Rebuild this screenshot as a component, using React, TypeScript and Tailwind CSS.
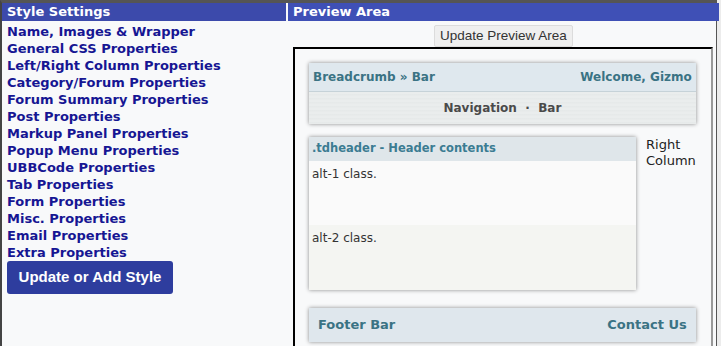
import React from "react";

const verdana = { fontFamily: '"DejaVu Sans", Verdana, sans-serif' };
const arial = { fontFamily: '"Liberation Sans", Arial, sans-serif' };

const links = [
  "Name, Images & Wrapper",
  "General CSS Properties",
  "Left/Right Column Properties",
  "Category/Forum Properties",
  "Forum Summary Properties",
  "Post Properties",
  "Markup Panel Properties",
  "Popup Menu Properties",
  "UBBCode Properties",
  "Tab Properties",
  "Form Properties",
  "Misc. Properties",
  "Email Properties",
  "Extra Properties",
];

function SettingsColumn() {
  return (
    <div className="flex flex-col">
      <div className="h-[18px] bg-[#3c4aab] pl-[5px] text-[13px] font-bold leading-[18px] text-white">
        Style Settings
      </div>
      <nav className="flex flex-col pt-[2px] pl-[5px]">
        {links.map((l) => (
          <a key={l} className="h-[17px] text-[13px] font-bold leading-[17px] text-[#161693]">
            {l}
          </a>
        ))}
      </nav>
      <div className="pl-[5px]">
        <button
          style={arial}
          className="h-[33px] w-[166px] rounded-[3px] bg-[#2e3d9e] text-[15px] font-bold text-white"
        >
          Update or Add Style
        </button>
      </div>
    </div>
  );
}

function Preview() {
  return (
    <div className="flex flex-col">
      <div className="h-[18px] bg-[#3f50b6] pl-[5px] text-[13px] font-bold leading-[18px] text-white">
        Preview Area
      </div>
      <div className="flex justify-center pt-[4px]">
        <button
          style={arial}
          className="h-[22px] rounded-[2px] border border-[#dcdcdc] bg-[#efefef] px-[5px] text-[13.5px] leading-[20px] text-[#333]"
        >
          Update Preview Area
        </button>
      </div>
      <div className="ml-[5px] mr-[6px] h-[320px] border-l-2 border-t-2 border-r-2 border-l-black border-t-black border-r-[#999] pl-[14px] pr-[15px] pt-[14px]">
        <div className="bg-[#e6ecee] shadow-[0_0_4px_rgba(0,0,0,0.45)]">
          <div className="flex h-[29px] items-center justify-between border-b border-[#c6d2d8] bg-[#dfe8ee] px-[4px] text-[12px] font-bold text-[#3a7384]">
            <span>Breadcrumb » Bar</span>
            <span>Welcome, Gizmo</span>
          </div>
          <div className="flex h-[32px] items-center justify-center bg-[repeating-linear-gradient(180deg,#eaeded_0px,#eaeded_2px,#e2e6e6_3px,#eef0f0_4px)] text-[12px] font-bold text-[#4a4a4a]">
            Navigation&nbsp;&nbsp;·&nbsp;&nbsp;Bar
          </div>
        </div>
        <div className="mt-[13px] flex gap-[10px]">
          <div className="w-[327px] shadow-[0_0_4px_rgba(0,0,0,0.45)]">
            <div className="flex h-[24px] items-center bg-[#dfe6ea] px-[3px] text-[11.5px] font-bold text-[#3b7c92]">
              .tdheader - Header contents
            </div>
            <div className="h-[64px] bg-[#fafafa] px-[3px] pt-[4px] text-[12px] text-[#333]">alt-1 class.</div>
            <div className="h-[65px] bg-[#f4f5f2] px-[3px] pt-[4px] text-[12px] text-[#333]">alt-2 class.</div>
          </div>
          <div className="text-[13px] leading-[16px] text-[#222]">
            Right
            <br />
            Column
          </div>
        </div>
        <div className="mt-[18px] flex h-[34px] items-center justify-between bg-[#dfe7ed] px-[9px] text-[13px] font-bold text-[#3a7384] shadow-[0_0_4px_rgba(0,0,0,0.45)]">
          <span>Footer Bar</span>
          <span>Contact Us</span>
        </div>
      </div>
    </div>
  );
}

export default function App() {
  return (
    <div style={verdana} className="h-[346px] w-[721px] overflow-hidden bg-[#ececec]">
      <div className="grid h-full w-[717px] grid-cols-[284px_1fr] gap-[2px] border-l-2 border-t-[3px] border-r border-l-[#444] border-t-[#555] border-r-[#555] bg-[#f8f9fa]">
        <SettingsColumn />
        <Preview />
      </div>
    </div>
  );
}
